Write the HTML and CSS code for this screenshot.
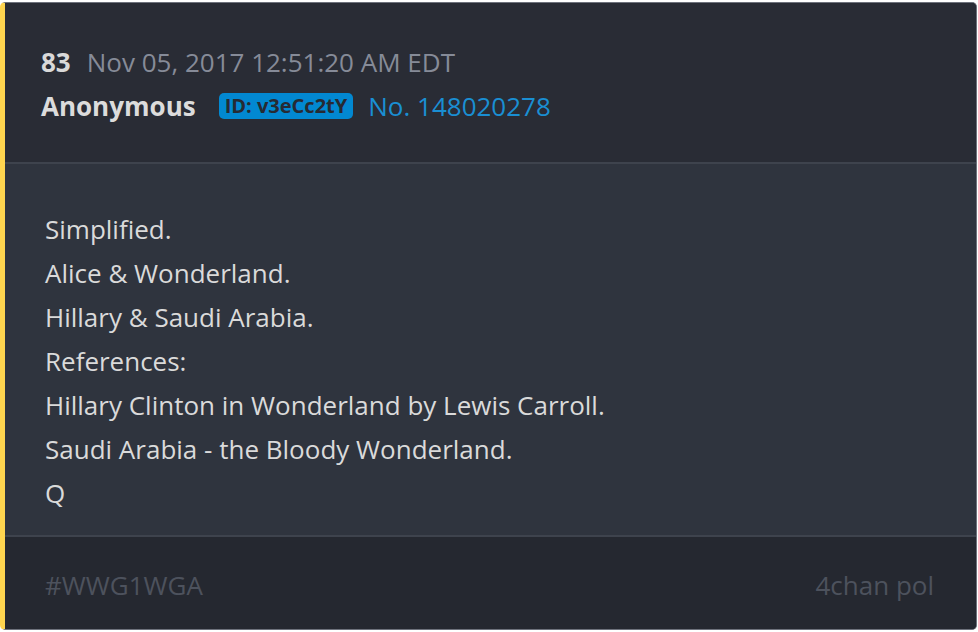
FILE: index.html
```html
<!DOCTYPE html>
<html>
<head>
<meta charset="utf-8">
<link rel="stylesheet" href="styles.css">
</head>
<body>
<div class="card">
  <div class="head">
    <div class="row"><span class="num">83</span><span class="date">Nov 05, 2017 12:51:20 AM EDT</span></div>
    <div class="row"><span class="name">Anonymous</span><span class="badge">ID: v3eCc2tY</span><span class="postno">No. 148020278</span></div>
  </div>
  <div class="body">
    <p>Simplified.</p>
    <p>Alice &amp; Wonderland.</p>
    <p>Hillary &amp; Saudi Arabia.</p>
    <p>References:</p>
    <p>Hillary Clinton in Wonderland by Lewis Carroll.</p>
    <p>Saudi Arabia - the Bloody Wonderland.</p>
    <p>Q</p>
  </div>
  <div class="foot">
    <span class="tag">#WWG1WGA</span>
    <span class="src">4chan pol</span>
  </div>
</div>
</body>
</html>
```
FILE: styles.css
```css
html, body {
  margin: 0;
  padding: 0;
  background: #ffffff;
}
body {
  font-family: "Open Sans", "Noto Sans", sans-serif;
  padding-top: 2px;
}
.card {
  width: 971px;
  height: 626px;
  border: 1px solid #6e727c;
  border-left: 5px solid #ffd54f;
  border-radius: 5px;
  overflow: hidden;
  display: flex;
  flex-direction: column;
  background: #2f343e;
}
.head {
  background: #292c35;
  border-bottom: 2px solid #3e434d;
  padding: 2px 0 0 36px;
  display: flex;
  flex-direction: column;
  justify-content: center;
  box-sizing: border-box;
  height: 161px;
  flex: none;
}
.row {
  display: flex;
  align-items: center;
  height: 44px;
  font-size: 26px;
}
.num {
  font-weight: 700;
  color: #d9d9d9;
  margin-right: 16px;
}
.date {
  color: #868b98;
}
.name {
  font-weight: 700;
  color: #dcdcdc;
  margin-right: 23px;
}
.badge {
  background: #0288d1;
  color: #262a33;
  font-weight: 700;
  font-size: 20px;
  line-height: 26px;
  padding: 0 6px;
  border-radius: 5px;
  margin-right: 15px;
}
.postno {
  color: #1a8fd3;
}
.body {
  flex: 1;
  padding: 43px 40px 0 40px;
  border-bottom: 2px solid #3e434d;
}
.body p {
  margin: 0;
  font-size: 26px;
  line-height: 44px;
  color: #dadada;
}
.foot {
  background: #252830;
  height: 92px;
  flex: none;
  display: flex;
  align-items: center;
  justify-content: space-between;
  padding: 4px 42px 0 40px;
  box-sizing: border-box;
  font-size: 26px;
  color: #4d525d;
}
```
